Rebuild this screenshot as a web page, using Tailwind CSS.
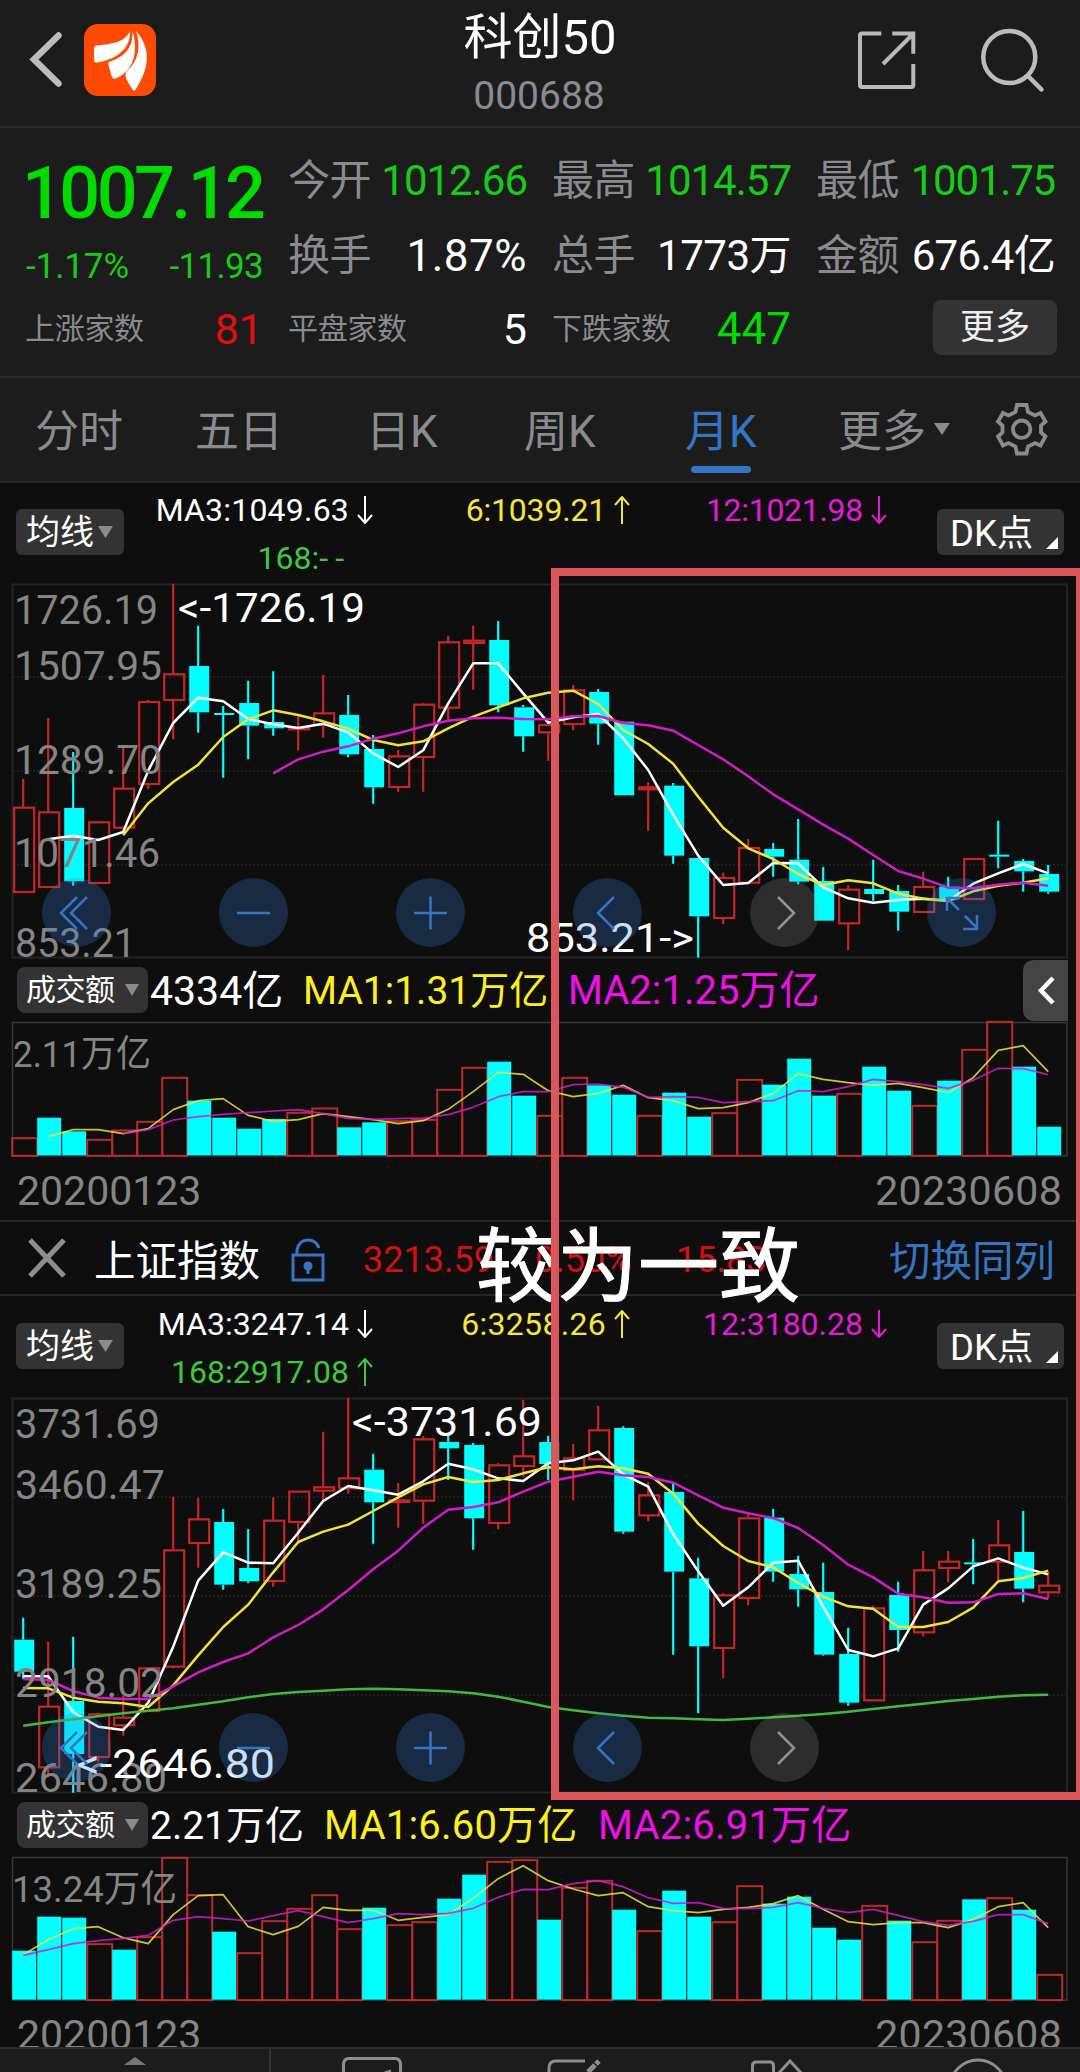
<!DOCTYPE html>
<html lang="zh-CN">
<head>
  <meta charset="UTF-8" />
  <title>科创50 000688</title>
  <meta name="viewport" content="width=device-width, initial-scale=1.0" />
  <script src="https://cdn.jsdelivr.net/npm/@tailwindcss/browser@4"></script>
</head>
<body class="bg-[#0e0e0e] font-[Roboto,'Noto_Sans_CJK_SC',sans-serif] text-white">
<div class="relative w-[1080px] h-[2072px] overflow-hidden flex flex-col whitespace-nowrap">

  <!-- Header -->
  <header class="h-32 shrink-0 bg-[#1c1c1c] border-b-2 border-[#2a2a2a] grid grid-cols-[1fr_auto_1fr]">
    <div class="flex items-start pt-[23px] pl-7">
      <svg class="w-9 h-[74px] mr-5" viewBox="0 0 36 74" fill="none" stroke="#bcbcbc" stroke-width="6.5" stroke-linecap="round"><path d="M30.500 12.500L6 36.500L30.500 60.500" /></svg>
      <svg class="w-[72px] h-[72px] mt-px" viewBox="0 0 72 72">
        <rect width="72" height="72" rx="14" fill="#ff4a05" />
        <path fill="#fff" d="M46 7C42 16 33 20 12 21.500Q10 22 10 25V36Q10 39 13 38.500C30 36 47 26 46 7Z" />
        <path fill="#fff" d="M48.500 7C49 25 40 33 26 37.500Q23.500 38.500 24.500 41L27.500 52Q28.500 55.500 31.500 54.500C46 49 56 32 48.500 7Z" />
        <path fill="#fff" d="M52 7C57 22 55 36 43 47Q40.500 50 42 54Q44 59 49 66Q50.500 68 52 65C66 43 67 24 52 7Z" />
      </svg>
    </div>
    <div class="flex flex-col items-center">
      <h1 class="text-[49px] leading-[56px] mt-2.5">科创50</h1>
      <p class="text-[39px] leading-[44px] mt-2 -ml-0.5 text-[#8a8a8f]">000688</p>
    </div>
    <div class="flex items-start justify-end pt-[27px] pr-[34px] gap-[60px]">
      <svg class="w-[62px] h-[66px]" viewBox="0 0 62 66" fill="none" stroke="#b9b9b9" stroke-width="4"><path d="M25.300 6.500H6Q4 6.500 4 8.500V58Q4 60 6 60H55.300Q57.300 60 57.300 58V37M36.300 6.500H57.300V26.700M56.500 7.500L27 37" /></svg>
      <svg class="w-[68px] h-[68px]" viewBox="0 0 68 68" fill="none" stroke="#bcbcbc" stroke-width="4.5" stroke-linecap="round"><circle cx="31.300" cy="30" r="26" /><path d="M50.500 49.500L63.500 62.500" /></svg>
    </div>
  </header>

  <!-- Quote -->
  <section class="h-[250px] shrink-0 bg-[#1c1c1c] border-b-2 border-[#2a2a2a] pl-[25px] pr-6 grid grid-cols-[238px_239px_239px_239px] gap-x-[25px] grid-rows-[102px_50px_98px] text-[42px] leading-[50px]">
    <div class="flex items-end -ml-[3px] text-[72px] leading-[72px] font-medium tracking-[-3.600px] text-[#00dc00]">1007.12</div>
    <div class="flex justify-between items-center text-[#19cb19] pt-1"><span class="text-[42px] text-[#8a8a8f] tracking-[-0.500px]">今开</span><span class="tracking-[-1px]">1012.66</span></div>
    <div class="flex justify-between items-center text-[#19cb19] pt-1"><span class="text-[42px] text-[#8a8a8f] tracking-[-0.500px]">最高</span><span class="tracking-[-1px]">1014.57</span></div>
    <div class="flex justify-between items-center text-[#19cb19] pt-1"><span class="text-[42px] text-[#8a8a8f] tracking-[-0.500px]">最低</span><span class="tracking-[-1.200px]">1001.75</span></div>

    <div class="flex justify-between items-center pt-6 text-[35px] tracking-[-0.100px] text-[#19cb19]"><span class="ml-px">-1.17%</span><span class="tracking-[-0.700px]">-11.93</span></div>
    <div class="flex justify-between items-center pt-0.5"><span class="text-[42px] text-[#8a8a8f] tracking-[-0.500px]">换手</span><span class="text-[44px] tracking-[0.500px]">1.87%</span></div>
    <div class="flex justify-between items-center pt-0.5"><span class="text-[42px] text-[#8a8a8f] tracking-[-0.500px]">总手</span><span class="tracking-[-0.500px]">1773万</span></div>
    <div class="flex justify-between items-center pt-0.5"><span class="text-[42px] text-[#8a8a8f] tracking-[-0.500px]">金额</span><span class="tracking-[-0.700px]">676.4亿</span></div>

    <div class="flex justify-between items-center"><span class="text-[30px] text-[#8a8a8f] tracking-[-0.300px]">上涨家数</span><span class="text-[43px] text-[#e01010]">81</span></div>
    <div class="flex justify-between items-center"><span class="text-[30px] text-[#8a8a8f] tracking-[-0.300px]">平盘家数</span><span class="text-[43px]">5</span></div>
    <div class="flex justify-between items-center"><span class="text-[30px] text-[#8a8a8f] tracking-[-0.300px]">下跌家数</span><span class="text-[44px] text-[#00dc00]">447</span></div>
    <div class="flex justify-end items-center -mr-0.5 pb-1"><span class="w-[124px] h-[55px] rounded-lg bg-[#333] text-[35px] leading-[55px] text-center text-[#eee]">更多</span></div>
  </section>

  <!-- Period tabs -->
  <nav class="h-[105px] shrink-0 bg-[#1c1c1c] border-b-2 border-[#262626] pl-[35px] pr-8 flex items-start text-[44px] leading-[108px] text-[#8a8a8f]">
    <span class="w-[160px]">分时</span>
    <span class="w-[171px]">五日</span>
    <span class="w-[158px]">日K</span>
    <span class="w-[161px]">周K</span>
    <span class="w-[153px] relative text-[#3475c5]">月K<i class="absolute left-1.5 top-[88px] w-[60px] h-[7px] rounded-sm bg-[#3475c5]"></i></span>
    <span class="w-[96px]">更多</span>
    <svg class="w-4 h-3 mt-[45px]" viewBox="0 0 16 12"><path fill="#8a8a8f" d="M0 0H16L8 12Z" /></svg>
    <svg class="w-[54px] h-[54px] mt-[24px] ml-auto" viewBox="0 0 54 54" fill="none" stroke="#8a8a8f" stroke-width="3.8">
      <path d="M23 3H32.500L34 10L41 13.500L46.500 11L51.500 19.500L47 23.500V30.500L51.500 34.500L46.500 43.500L41 41L34 44.500L32.500 51.500H23L21.500 44.500L14.500 41L9 43.500L4 34.500L8.500 30.500V23.500L4 19.500L9 11L14.500 13.500L21.500 10Z" /><circle cx="27.700" cy="27.200" r="8.700" />
    </svg>
  </nav>

  <!-- 科创50 monthly chart -->
  <section class="h-[739px] shrink-0 border-b-2 border-[#262626]">
    <div class="h-[101px] pl-4 pr-4 flex items-start">
      <button class="mt-[26px] w-[108px] h-[46px] rounded-md bg-[#333] pl-[10px] flex items-center gap-1 text-[34px] leading-[48px]">均线<svg class="w-[15px] h-3" viewBox="0 0 15 12"><path fill="#8a8a8f" d="M0 0H15L7.500 12Z" /></svg></button>
      <div class="w-[763px] grid grid-cols-[249px_257px_257px] text-[32px] leading-[48px] text-right pt-[3px]">
        <span class="flex items-center justify-end gap-2 tracking-[0.200px]">MA3:1049.63<svg class="w-4 h-7" viewBox="0 0 16 28" fill="none" stroke="currentColor" stroke-width="2"><path d="M8 0V27M1 19L8 27L15 19" /></svg></span>
        <span class="flex items-center justify-end gap-2 tracking-[-0.200px] text-[#f5e63c]">6:1039.21<svg class="w-4 h-7" viewBox="0 0 16 28" fill="none" stroke="currentColor" stroke-width="2"><path d="M8 28V1M1 9L8 1L15 9" /></svg></span>
        <span class="flex items-center justify-end gap-2 tracking-[-0.300px] text-[#e41ad8]">12:1021.98<svg class="w-4 h-7" viewBox="0 0 16 28" fill="none" stroke="currentColor" stroke-width="2"><path d="M8 0V27M1 19L8 27L15 19" /></svg></span>
        <span class="text-[#3fc83f] pr-[22px]">168:<span class="tracking-[7px]">--</span></span>
      </div>
      <button class="ml-auto mt-[26px] w-[127px] h-[46px] rounded-md bg-[#333] pl-[13px] pr-[6px] flex items-end justify-between text-[36.500px] leading-[46px]"><span class="relative top-0.5">DK点</span><svg class="w-3 h-3 mb-[6px]" viewBox="0 0 12 12"><path fill="#fff" d="M12 0V12H0Z" /></svg></button>
    </div>
    <div class="relative h-[375px]">
      <svg id="kline1" class="block w-[1080px] h-[375px] overflow-visible"></svg>
      <div class="absolute left-[42px] top-[294px] flex gap-[108px]" data-controls="6"></div>
    </div>
    <div class="h-[63px] pl-[17px] flex items-start text-[39px] leading-[48px]">
      <button class="mt-2 w-[131px] h-[46px] rounded-lg bg-[#333] pl-[9px] flex items-center gap-2.5 text-[30px] tracking-[-0.500px]">成交额<svg class="w-[14px] h-3" viewBox="0 0 14 12"><path fill="#8a8a8f" d="M0 0H14L7 12Z" /></svg></button>
      <span class="w-[155px] pl-0.5 pt-2 text-[41px]">4334亿</span>
      <span class="w-[265px] pt-2 text-[#fdf01c]">MA1:1.31万亿</span>
      <span class="pt-2 text-[40px] text-[#ee10e4]">MA2:1.25万亿</span>
      <svg class="w-[45px] h-[61px] mt-px ml-auto mr-3" viewBox="0 0 45 61"><path fill="#444" d="M45 0H12Q0 0 0 12V49Q0 61 12 61H45Z" /><path d="M30 18L18 30.500L30 43" fill="none" stroke="#fff" stroke-width="4.500" /></svg>
    </div>
    <svg id="vol1" class="block w-[1080px] h-[135px] overflow-visible"></svg>
    <div class="flex justify-between pl-[17px] pr-[18px] text-[41px] leading-[68px] text-[#858585]"><span>20200123</span><span class="tracking-[0.300px]">20230608</span></div>
  </section>

  <!-- Comparison index bar -->
  <div class="h-[74px] shrink-0 border-b-2 border-[#262626] pl-7 pr-[26px] flex items-center text-[41.500px]">
    <svg class="w-[38px] h-[40px]" viewBox="0 0 38 40" stroke="#8e8e92" stroke-width="5"><path d="M2 2L36 38M36 2L2 38" /></svg>
    <span class="ml-7 w-[197px] pt-2">上证指数</span>
    <svg class="w-[34px] h-[44px] mt-1" viewBox="0 0 34 44" fill="none" stroke="#3475c5" stroke-width="3"><path d="M2 17H32V42H2ZM6 17V12Q8 2 17 2Q25 2 28 10" /><circle cx="17" cy="28" r="3" fill="#3475c5" /><path d="M17 29V36" /></svg>
    <div class="ml-[38px] flex text-[36px] pt-[3px] text-[#d40f0f]"><span class="w-[172px]">3213.59</span><span class="w-[141px]">0.50%</span><span>15.83</span></div>
    <span class="ml-auto -mr-px pt-2 text-[#3475c5]">切换同列</span>
  </div>

  <!-- 上证指数 monthly chart -->
  <section class="h-[751px] shrink-0 overflow-hidden">
    <div class="h-[102px] pl-4 pr-4 flex items-start">
      <button class="mt-[27px] w-[108px] h-[46px] rounded-md bg-[#333] pl-[10px] flex items-center gap-1 text-[34px] leading-[48px]">均线<svg class="w-[15px] h-3" viewBox="0 0 15 12"><path fill="#8a8a8f" d="M0 0H15L7.500 12Z" /></svg></button>
      <div class="w-[763px] grid grid-cols-[249px_257px_257px] text-[32px] leading-[48px] text-right pt-1">
        <span class="flex items-center justify-end gap-2">MA3:3247.14<svg class="w-4 h-7" viewBox="0 0 16 28" fill="none" stroke="currentColor" stroke-width="2"><path d="M8 0V27M1 19L8 27L15 19" /></svg></span>
        <span class="flex items-center justify-end gap-2 tracking-[0.300px] text-[#f5e63c]">6:3258.26<svg class="w-4 h-7" viewBox="0 0 16 28" fill="none" stroke="currentColor" stroke-width="2"><path d="M8 28V1M1 9L8 1L15 9" /></svg></span>
        <span class="flex items-center justify-end gap-2 text-[#e41ad8]">12:3180.28<svg class="w-4 h-7" viewBox="0 0 16 28" fill="none" stroke="currentColor" stroke-width="2"><path d="M8 0V27M1 19L8 27L15 19" /></svg></span>
        <span class="flex items-center justify-end gap-2 text-[#3fc83f]">168:2917.08<svg class="w-4 h-7" viewBox="0 0 16 28" fill="none" stroke="currentColor" stroke-width="2"><path d="M8 28V1M1 9L8 1L15 9" /></svg></span>
      </div>
      <button class="ml-auto mt-[27px] w-[127px] h-[46px] rounded-md bg-[#333] pl-[13px] pr-[6px] flex items-end justify-between text-[36.500px] leading-[46px]"><span class="relative top-0.5">DK点</span><svg class="w-3 h-3 mb-[6px]" viewBox="0 0 12 12"><path fill="#fff" d="M12 0V12H0Z" /></svg></button>
    </div>
    <div class="relative h-[396px]">
      <svg id="kline2" class="block w-[1080px] h-[396px] overflow-visible"></svg>
      <div class="absolute left-[42px] top-[315px] flex gap-[108px]" data-controls="5"></div>
    </div>
    <div class="h-[63px] pl-[17px] flex items-start text-[39px] leading-[48px]">
      <button class="mt-2 w-[131px] h-[46px] rounded-lg bg-[#333] pl-[9px] flex items-center gap-2.5 text-[30px] tracking-[-0.500px]">成交额<svg class="w-[14px] h-3" viewBox="0 0 14 12"><path fill="#8a8a8f" d="M0 0H14L7 12Z" /></svg></button>
      <span class="w-[176px] pl-0.5 pt-2">2.21万亿</span>
      <span class="w-[274px] pt-2 text-[40px] tracking-[0.200px] text-[#fdf01c]">MA1:6.60万亿</span>
      <span class="pt-2 text-[40px] tracking-[0.200px] text-[#ee10e4]">MA2:6.91万亿</span>
    </div>
    <svg id="vol2" class="block w-[1080px] h-[144px] overflow-visible"></svg>
    <div class="flex justify-between pl-[17px] pr-[18px] text-[41px] leading-[68px] text-[#858585]"><span>20200123</span><span class="tracking-[0.300px]">20230608</span></div>
  </section>

  <!-- Bottom bar -->
  <footer class="h-[25px] shrink-0 bg-[#1c1c1c] border-t-2 border-[#2c2c2c] flex">
    <div class="w-[271px] border-r-2 border-[#333] pt-2 flex justify-center"><svg class="w-[22px] h-2" viewBox="0 0 22 8"><path fill="#77777b" d="M11 0L22 8H0Z" /></svg></div>
    <svg class="w-[809px] h-[23px]" viewBox="271 2049 809 23" fill="none" stroke="#8e8e92" stroke-width="3">
      <path d="M343.500 2090V2065Q343.500 2058.500 349 2058.500H395Q400.500 2058.500 400.500 2065V2090M382 2074L391 2071" />
      <path d="M549 2080V2068Q549 2061 556 2061H585" /><path d="M588 2072L595 2065M596 2064L599 2061" stroke-width="5" />
      <path d="M752.500 2080V2066Q752.500 2062 756 2062H770Q773.500 2062 773.500 2066V2080M778 2074L790 2061L802 2074" />
      <circle cx="978" cy="2088" r="28" />
    </svg>
  </footer>

  <!-- Annotation drawn over both charts -->
  <p class="absolute left-[476px] top-[1228px] text-[81px] leading-[80px] [-webkit-text-stroke:1px_white]">较为一致</p>
  <div class="absolute left-[551px] top-[568px] w-[533px] h-[1232px] border-8 border-[#db565b]"></div>
</div>

<script>
  const UP = "#c62626", DOWN = "#00ffff";
  const X0 = 23.2, STEP = 25;
  const WHITE = "#ffffff", YELLOW = "#f0e23c", PINK = "#d21ccb", GREEN = "#43b83b";

  // values run downwards from `top`, three units to a pixel
  function line(points, start, top, color, width) {
    const d = points.map((v, i) => `${X0 + (i + start) * STEP},${(v - top) / 3}`).join(" ");
    return `<polyline points="${d}" fill="none" stroke="${color}" stroke-width="${width}" stroke-linejoin="round"/>`;
  }

  function label(text, x, y, width, color, size) {
    return `<text x="${x}" y="${y}" textLength="${width}" lengthAdjust="spacingAndGlyphs" font-size="${size}" fill="${color}">${text.replace("<", "&lt;").replace(">", "&gt;")}</text>`;
  }

  function drawKline(id, c) {
    let s = `<rect x="12.500" y="0.500" width="1054.500" height="${c.height}" fill="none" stroke="#242424" stroke-width="2"/>`;
    c.grid.forEach(y => {
      s += `<line x1="13" x2="1066" y1="${y}" y2="${y}" stroke="#242424" stroke-width="1.500" stroke-dasharray="2 2"/>`;
    });
    c.candles.trim().split(/\s*\n\s*/).forEach((row, i) => {
      const p = row.split(" ");
      const [a, b, hi, lo] = p.slice(1).map(v => (Number(v) - c.top) / 3);
      const x = X0 + i * STEP, col = p[0] === "r" ? UP : DOWN;
      s += `<path d="M${x} ${hi}V${a}M${x} ${b}V${lo}" stroke="${col}" stroke-width="2.2"/>`;
      if (p[0] === "r") s += `<rect x="${x - 9}" y="${a}" width="20" height="${b - a}" fill="none" stroke="${col}" stroke-width="2.2"/>`;
      else s += `<rect x="${x - 9}" y="${a}" width="20" height="${b - a}" fill="${col}"/>`;
    });
    c.lines.forEach(l => s += line(l[2], l[1], c.top, l[0], 2.5));
    c.labels.forEach(l => s += label(l[0], l[1], l[2], l[3], l[4] || "#858585", 40));
    document.getElementById(id).innerHTML = s;
  }

  function drawVolume(id, c) {
    const base = (c.bottom - c.top) / 3;
    let s = `<rect x="12.500" y="0.500" width="1054.500" height="${base}" fill="none" stroke="#383838" stroke-width="1.500"/>`;
    c.bars.split(" ").forEach((b, i) => {
      const x = X0 + i * STEP - 11, y = (Number(b.slice(1)) - c.top) / 3;
      if (b[0] === "r") s += `<rect x="${x}" y="${y + 0.5}" width="25" height="${base - y}" fill="none" stroke="#b92a2a" stroke-width="2"/>`;
      else s += `<rect x="${x}" y="${y}" width="24" height="${base - y}" fill="${DOWN}"/>`;
    });
    c.lines.forEach(l => s += `<g opacity="0.85">${line(l[2], l[1], c.top, l[0], 1.7)}</g>`);
    s += label(c.label[0], c.label[1], c.label[2], c.label[3], "#858585", 37);
    document.getElementById(id).innerHTML = s;
  }

  drawKline("kline1", {
    top: 312, height: 373, grid: [93, 187, 281],
    candles: `r 983 1236 897 1236
      r 997 1221 714 1221
      c 984 1204 816 1217
      r 1027 1209 1023 1209
      r 926 1043 804 1043
      r 666 912 660 926
      r 583 660 311 778
      c 558 697 437 758
      c 699 705 678 893
      c 669 737 602 838
      c 726 745 574 767
      r 744 748 707 812
      r 700 735 585 773
      c 705 823 645 832
      c 807 922 765 971
      r 829 921 810 935
      r 674 831 670 935
      r 487 683 467 722
      r 482 489 437 629
      c 480 676 423 697
      c 682 769 675 815
      r 735 757 725 842
      r 631 732 615 751
      c 636 731 627 794
      c 725 946 725 946
      r 922 928 907 1052
      c 917 1127 909 1151
      c 1134 1309 1134 1433
      r 1194 1314 1178 1333
      r 1104 1208 1077 1208
      c 1107 1130 1089 1190
      c 1139 1205 1017 1213
      c 1203 1322 1161 1322
      r 1229 1330 1216 1410
      c 1227 1242 1139 1262
      c 1233 1295 1215 1352
      r 1221 1296 1175 1296
      c 1220 1258 1190 1265
      r 1137 1257 1137 1257
      c 1124 1130 1022 1165
      c 1143 1174 1137 1235
      c 1182 1235 1155 1241`,
    lines: [
      [WHITE, 1, [1078,1067,1080,1056,872,729,653,664,717,733,744,731,757,820,861,811,670,550,550,640,728,712,702,775,870,1004,1127,1215,1209,1149,1150,1222,1255,1268,1260,1256,1262,1211,1180,1152,1180]],
      [YELLOW, 4, [1066,970,906,854,771,718,691,705,724,746,780,796,784,745,710,682,655,638,632,672,750,792,851,950,1043,1105,1137,1182,1215,1201,1210,1241,1256,1263,1234,1217,1208,1195]],
      [PINK, 10, [880,838,815,799,776,760,739,722,715,713,717,718,709,708,729,736,752,795,838,889,943,988,1034,1076,1125,1173,1196,1223,1225,1214,1208,1217]]
    ],
    labels: [
      ["1726.19", 14, 39.5, 144], ["1507.95", 14, 95.5, 148], ["1289.70", 14, 189.5, 148], ["1071.46", 14, 282.5, 146], ["853.21", 15, 372.5, 121],
      ["<-1726.19", 178, 37.5, 187, "#fff"], ["853.21->", 526, 367.5, 168, "#fff"]
    ]
  });

  drawVolume("vol1", {
    top: 216, bottom: 616, label: ["2.11万亿", 13, 45, 138],
    bars: "r563 c503 c544 r568 r540 r514 r382 c452 c503 c536 c507 r487 r474 c532 c517 r512 r508 r418 r352 c335 c437 r496 r382 c406 c434 r496 c428 c500 r488 r388 c404 c326 c437 r430 c350 c422 r466 c392 r298 r214 c350 c530",
    lines: [
      [YELLOW, 1, [560,539,539,551,536,479,452,446,496,514,509,491,500,509,521,512,478,425,367,373,422,440,430,406,443,452,476,473,458,430,371,388,398,406,400,413,428,383,301,287,365]],
      [PINK, 4, [551,539,510,500,493,488,483,479,491,505,508,506,504,494,472,440,425,425,404,402,412,442,440,442,458,455,452,422,425,410,388,395,404,415,391,355,356,374]]
    ]
  });

  drawKline("kline2", {
    top: 54, height: 394, grid: [99, 198, 297],
    candles: `c 779 875 713 897
      r 980 1162 785 1192
      c 963 1122 770 1238
      r 1003 1131 998 1145
      r 1013 1036 948 1067
      r 865 993 865 993
      r 511 860 350 865
      r 418 489 353 563
      c 426 614 387 629
      c 564 604 447 610
      r 422 603 352 620
      r 335 426 335 492
      r 322 332 155 360
      r 295 325 53 341
      c 269 367 221 491
      r 361 366 309 443
      r 178 362 168 432
      c 186 205 163 300
      c 195 415 188 509
      r 256 429 250 448
      r 229 258 59 290
      c 186 252 167 300
      r 235 270 191 361
      r 151 238 78 241
      c 144 455 139 461
      r 346 406 306 424
      c 336 575 308 824
      c 595 799 533 1000
      r 646 804 640 895
      r 415 654 397 676
      c 413 575 387 605
      c 582 628 527 680
      c 636 824 548 827
      c 822 968 743 977
      r 685 961 677 961
      c 645 750 605 815
      r 571 757 513 769
      r 545 564 513 607
      c 547 553 477 613
      r 496 545 420 600
      c 516 626 393 667
      r 617 637 575 655`,
    lines: [
      [WHITE, 0, [889,889,997,1040,1050,968,800,602,517,548,550,458,363,318,331,344,304,251,268,295,303,250,241,215,283,320,462,574,677,622,548,542,680,810,829,805,674,625,559,535,563,583]],
      [YELLOW, 0, [924,925,953,965,970,981,916,826,741,674,577,486,455,434,393,352,313,291,306,300,280,262,268,259,265,281,341,431,498,543,562,609,650,679,686,741,741,726,683,604,594,572]],
      [PINK, 0, [897,900,933,953,957,957,919,877,846,820,772,735,688,630,568,512,443,389,381,367,335,305,290,275,286,291,308,346,383,400,414,444,495,554,592,641,652,668,667,642,640,657]],
      [GREEN, 0, [1037,1027,1018,1009,1000,992,985,974,964,952,942,936,932,928,926,928,931,934,940,950,965,981,991,1000,1007,1013,1015,1018,1020,1016,1012,1007,1002,995,987,979,971,963,957,950,946,944]]
    ],
    labels: [
      ["3731.69", 15, 39.5, 145], ["3460.47", 15, 100.5, 150], ["3189.25", 15, 199.5, 147], ["2918.02", 15, 298.5, 148], ["2646.80", 15, 393.5, 152],
      ["<-3731.69", 352, 37.5, 190, "#fff"], ["<-2646.80", 77, 379.5, 198, "#fff"]
    ]
  });

  drawVolume("vol2", {
    top: 201, bottom: 629, label: ["13.24万亿", 12, 45, 165],
    bars: "c482 c380 c383 r461 c479 r440 r202 r314 c425 r488 r392 r355 r314 r416 c353 r404 r395 c326 c254 r214 r209 c389 r292 r271 c359 r422 c302 c380 r395 r287 c341 c320 c413 c449 r346 c392 r455 r391 c328 r323 c359 r553",
    lines: [
      [YELLOW, 0, [494,449,416,410,443,461,374,317,314,410,434,409,352,361,361,391,382,374,325,266,227,272,297,317,308,350,362,368,358,352,341,317,358,395,404,398,398,413,388,350,338,413]],
      [PINK, 0, [496,479,461,452,445,436,391,380,386,393,377,362,380,398,386,371,374,370,355,322,298,299,281,272,290,323,340,338,355,356,352,338,355,368,358,376,395,406,394,374,374,401]]
    ]
  });

  // round zoom / scroll controls
  const icons = [
    "M35 19L19 35L35 51M45 19L29 35L45 51",
    "M18 35H51",
    "M18 35H51M34.500 18.500V51.500",
    "M41 19L25 35L41 51",
    "M28 19L44 35L28 51",
    "M32 32L20 20M20 33V20H33M38 38L50 50M50 37V51H36"
  ];
  document.querySelectorAll("[data-controls]").forEach(el => {
    el.innerHTML = icons.slice(0, Number(el.dataset.controls)).map((d, i) => {
      const grey = i === 4;
      return `<svg class="w-[69px] h-[69px]" viewBox="0 0 69 69"><circle cx="34.500" cy="34.500" r="34.500" fill="${grey ? "#a0a0a0" : "#3580dc"}" fill-opacity="${grey ? 0.21 : 0.26}"/><path d="${d}" fill="none" stroke="${grey ? "#929296" : "#3475c5"}" stroke-width="2.500"/></svg>`;
    }).join("");
  });
</script>
</body>
</html>
